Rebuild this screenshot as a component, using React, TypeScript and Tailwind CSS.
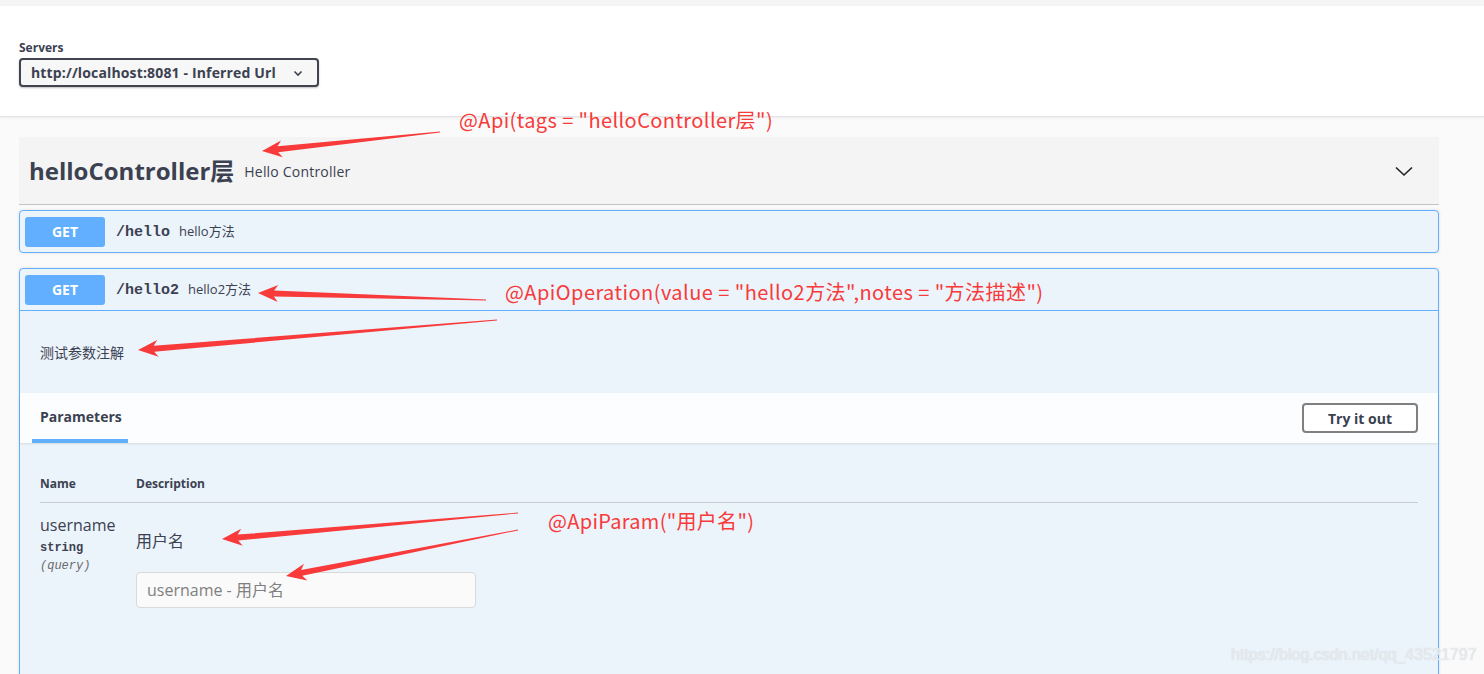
import React from "react";

// Red hand-drawn style arrows: tail -> tip
const arrows: { from: [number, number]; to: [number, number] }[] = [
  { from: [440, 132], to: [262, 151] },
  { from: [486, 300], to: [258, 293] },
  { from: [497, 320], to: [138, 350] },
  { from: [518, 513], to: [222, 539] },
  { from: [518, 530], to: [286, 576] },
];

function arrowPoints(from: [number, number], to: [number, number]) {
  const [x1, y1] = from;
  const [x2, y2] = to;
  const len = Math.hypot(x2 - x1, y2 - y1);
  const dx = (x2 - x1) / len;
  const dy = (y2 - y1) / len;
  const nx = -dy;
  const ny = dx;
  const head = 20;
  const at = (d: number, w: number) => {
    const px = x1 + dx * d + nx * w;
    const py = y1 + dy * d + ny * w;
    return `${px.toFixed(1)},${py.toFixed(1)}`;
  };
  return [
    at(0, 0.4),
    at(len - head + 4, 3),
    at(len - head, 8.5),
    at(len, 0),
    at(len - head, -8.5),
    at(len - head + 4, -3),
    at(0, -0.4),
  ].join(" ");
}

function Annotations() {
  return (
    <div className="absolute inset-0 pointer-events-none">
      <svg className="absolute left-0 top-0" width="1484" height="674">
        {arrows.map((a, i) => (
          <polygon key={i} points={arrowPoints(a.from, a.to)} fill="#f83a3a" />
        ))}
      </svg>
      <div className="absolute left-[459px] top-[106px] text-[20px] leading-[28px] tracking-[0.4px] text-[#f83a3a] font-['Noto_Sans_CJK_SC',sans-serif] whitespace-nowrap">
        @Api(tags = "helloController层")
      </div>
      <div className="absolute left-[505px] top-[278px] text-[20px] leading-[28px] tracking-[0.45px] text-[#f83a3a] font-['Noto_Sans_CJK_SC',sans-serif] whitespace-nowrap">
        @ApiOperation(value = "hello2方法",notes = "方法描述")
      </div>
      <div className="absolute left-[548px] top-[507px] text-[20px] leading-[28px] tracking-[0.3px] text-[#f83a3a] font-['Noto_Sans_CJK_SC',sans-serif] whitespace-nowrap">
        @ApiParam("用户名")
      </div>
      <div className="absolute left-[1231px] top-[645px] text-[16px] leading-[20px] text-[#e8ecf0] font-['Liberation_Sans',sans-serif] whitespace-nowrap [text-shadow:0_0_1px_#c8ccd0]">
        https://blog.csdn.net/qq_43521797
      </div>
    </div>
  );
}

function GetBadge() {
  return (
    <div className="w-[80px] h-[30px] rounded-[3px] bg-[#61affe] flex items-center justify-center text-white text-[14px] font-bold">
      GET
    </div>
  );
}

export default function App() {
  return (
    <div className="relative min-h-screen bg-[#fafafa] text-[#3b4151] font-['Open_Sans','Noto_Sans_CJK_SC',sans-serif] overflow-hidden">
      <div className="h-[6px] bg-[#f5f5f5]" />

      {/* Servers bar */}
      <div className="bg-white h-[111px] border-b border-[#e4e4e4] shadow-[0_1px_2px_rgba(0,0,0,0.06)] px-[19px] pt-[35px]">
        <div className="text-[12px] font-bold leading-[14px]">Servers</div>
        <div className="mt-[3px] w-[300px] h-[29px] border-2 border-[#41444e] rounded-[4px] bg-[#f7f7f7] shadow-[0_1px_2px_rgba(0,0,0,0.25)] flex items-center pl-[10px] pr-[13px] justify-between">
          <span className="text-[14px] font-bold tracking-[0.15px]">http://localhost:8081 - Inferred Url</span>
          <svg width="12" height="12" viewBox="0 0 12 12" fill="none">
            <path d="M2.5 4.5 6 8l3.5-3.5" stroke="#3b4151" strokeWidth="1.6" />
          </svg>
        </div>
      </div>

      <div className="pl-[19px] pt-[20px] w-[1439px]">
        {/* Tag header */}
        <div className="h-[68px] bg-[#f4f4f4] border-b border-[#c4c4c4] flex items-center pl-[10px] pr-[26px]">
          <span className="text-[24px] font-bold leading-none">helloController层</span>
          <span className="ml-[10px] text-[14px] mt-[2px] tracking-[0.2px]">Hello Controller</span>
          <svg className="ml-auto" width="18" height="12" viewBox="0 0 18 12" fill="none">
            <path d="M1 2.5 9 10l8-7.5" stroke="#222" strokeWidth="1.6" />
          </svg>
        </div>

        {/* Operation 1 */}
        <div className="mt-[5px] border border-[#61affe] rounded-[4px] bg-[#ebf3fb] shadow-[0_0_3px_rgba(0,0,0,0.12)] h-[43px] flex items-center pl-[5px]">
          <GetBadge />
          <span className="ml-[11px] mt-[3px] font-['Liberation_Mono',monospace] font-bold text-[15px]">/hello</span>
          <span className="ml-[9px] text-[13px]">hello方法</span>
        </div>

        {/* Operation 2 */}
        <div className="mt-[15px] border border-[#61affe] rounded-[4px] bg-[#ebf3fb] shadow-[0_0_3px_rgba(0,0,0,0.12)] h-[420px]">
          <div className="h-[42px] border-b border-[#61affe] flex items-center pl-[5px]">
            <GetBadge />
            <span className="ml-[11px] mt-[3px] font-['Liberation_Mono',monospace] font-bold text-[15px]">/hello2</span>
            <span className="ml-[9px] text-[13px]">hello2方法</span>
          </div>

          <div className="h-[82px] flex items-center pl-[20px] text-[14px]">测试参数注解</div>

          <div className="h-[50px] bg-[#fbfdfe] shadow-[0_1px_2px_rgba(0,0,0,0.1)] flex items-center justify-between pl-[12px] pr-[20px]">
            <div className="h-full flex flex-col justify-end">
              <div className="px-[8px] text-[14px] font-bold pb-[12px]">Parameters</div>
              <div className="h-[4px] w-[96px] bg-[#61affe]" />
            </div>
            <button className="w-[116px] h-[30px] border-2 border-[#808080] rounded-[4px] bg-white text-[14px] font-bold">
              Try it out
            </button>
          </div>

          <div className="px-[20px] pt-[32px]">
            <div className="flex text-[12px] font-bold h-[28px] border-b border-[#c8ccd4] items-start">
              <div className="w-[96px]">Name</div>
              <div>Description</div>
            </div>
            <div className="flex pt-[12px]">
              <div className="w-[96px]">
                <div className="text-[16px] leading-[20px]">username</div>
                <div className="font-['Liberation_Mono',monospace] font-bold text-[12px] leading-[18px] mt-[4px]">string</div>
                <div className="font-['Liberation_Mono',monospace] italic text-[12px] leading-[18px] text-[#6b6b6b]">(query)</div>
              </div>
              <div className="pt-[16px]">
                <div className="text-[16px] leading-[20px]">用户名</div>
                <input
                  className="mt-[21px] w-[340px] h-[36px] border border-[#d9d9d9] rounded-[4px] bg-[#fafafa] px-[10px] text-[16px] placeholder:text-[#808080] outline-none"
                  placeholder="username - 用户名"
                />
              </div>
            </div>
          </div>
        </div>
      </div>

      <Annotations />
    </div>
  );
}
